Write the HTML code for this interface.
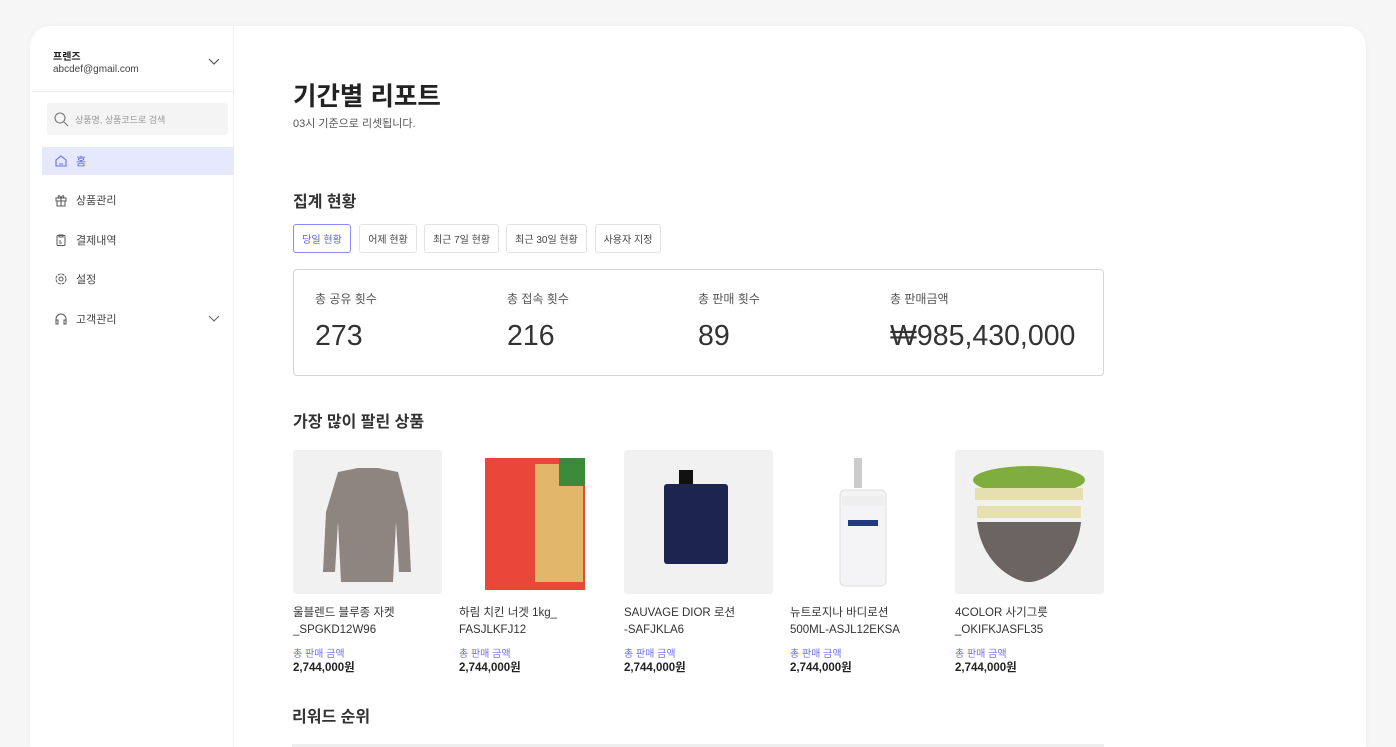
<!DOCTYPE html>
<html><head><meta charset="utf-8"><style>
*{box-sizing:border-box;margin:0;padding:0}
html,body{width:1396px;height:747px;overflow:hidden}
body{background:#f6f6f7;font-family:"Liberation Sans","Noto Sans CJK KR",sans-serif;color:#222;position:relative}
.card{position:absolute;left:30px;top:26px;width:1336px;height:721px;background:#fff;border-radius:20px 20px 0 0;box-shadow:0 0 6px rgba(0,0,0,.04)}
.side{position:absolute;left:30px;top:26px;width:204px;height:721px;border-right:1px solid #f0f0f0}
.t{position:absolute;white-space:nowrap}
.menu{position:absolute;left:12px;width:192px;height:28px;font-size:11px;color:#444;display:flex;align-items:center;padding-left:12px}
.menu svg{margin-right:8px}
.btn{position:absolute;top:224px;height:29px;border:1px solid #e3e3e3;border-radius:3px;font-size:10px;color:#444;display:flex;align-items:center;justify-content:center}
.img{position:absolute;top:450px;width:149px;height:144px;background:#f1f1f2;border-radius:3px;overflow:hidden}
.pn{position:absolute;top:605px;font-size:11.5px;color:#333;line-height:17px}
.pl{position:absolute;top:645px;font-size:10px;color:#6d6df0}
.pp{position:absolute;top:659px;font-size:11.5px;font-weight:bold;color:#222}
</style></head><body>
<div class="card"></div>
<div class="side">
 <div class="t" style="left:23px;top:22px;font-size:10px;font-weight:bold">프렌즈</div>
 <div class="t" style="left:23px;top:38px;font-size:10px;color:#444">abcdef@gmail.com</div>
 <svg class="t" style="left:178px;top:32px" width="12" height="8"><path d="M1 1l5 5 5-5" fill="none" stroke="#555" stroke-width="1.2"/></svg>
 <div class="t" style="left:2px;top:65px;width:202px;height:1px;background:#ececec"></div>
 <div class="t" style="left:17px;top:77px;width:181px;height:32px;background:#f4f4f4;border-radius:3px"></div>
 <svg class="t" style="left:24px;top:86px" width="15" height="15"><circle cx="6" cy="6" r="5" fill="none" stroke="#777" stroke-width="1.1"/><path d="M10 10l4 4" stroke="#777" stroke-width="1.1"/></svg>
 <div class="t" style="left:45px;top:87px;font-size:9px;color:#999">상품명, 상품코드로 검색</div>
</div>
<div class="menu" style="left:42px;top:147px;background:#e6e8fd;color:#5a5ae6"><svg width="14" height="14"><path d="M2 6l5-4 5 4v6H2z" fill="none" stroke="#6b6bf0" stroke-width="1.1"/><path d="M5 10h4" stroke="#6b6bf0"/></svg>홈</div>
<div class="menu" style="left:42px;top:186px"><svg width="14" height="14"><rect x="2" y="5" width="10" height="3" fill="none" stroke="#555"/><rect x="3" y="8" width="8" height="5" fill="none" stroke="#555"/><path d="M7 5v8M7 5C5 1 3 3 5 5M7 5c2-4 4-2 2 0" fill="none" stroke="#555"/></svg>상품관리</div>
<div class="menu" style="left:42px;top:226px"><svg width="14" height="14"><rect x="3" y="2.5" width="8" height="10" rx="1" fill="none" stroke="#555"/><path d="M5 2h4v2H5zM5 8h2M5 10h3" fill="none" stroke="#555"/></svg>결제내역</div>
<div class="menu" style="left:42px;top:265px"><svg width="14" height="14"><circle cx="7" cy="7" r="5" fill="none" stroke="#555" stroke-dasharray="3 1"/><circle cx="7" cy="7" r="2" fill="none" stroke="#555"/></svg>설정</div>
<div class="menu" style="left:42px;top:305px"><svg width="14" height="14"><path d="M2 9V7a5 5 0 0110 0v2M2 8h2v4H2zM10 8h2v4h-2z" fill="none" stroke="#555"/></svg>고객관리</div>
<svg class="t" style="left:208px;top:315px" width="12" height="8"><path d="M1 1l5 5 5-5" fill="none" stroke="#666" stroke-width="1.1"/></svg>

<div class="t" style="left:293px;top:76px;font-size:25.5px;font-weight:bold;color:#222">기간별 리포트</div>
<div class="t" style="left:293px;top:115px;font-size:11px;color:#555">03시 기준으로 리셋됩니다.</div>
<div class="t" style="left:293px;top:188px;font-size:16px;font-weight:bold;color:#333">집계 현황</div>
<div class="btn" style="left:293px;width:58px;border-color:#8a8af5;color:#5a5ae6">당일 현황</div>
<div class="btn" style="left:359px;width:58px">어제 현황</div>
<div class="btn" style="left:424px;width:75px">최근 7일 현황</div>
<div class="btn" style="left:506px;width:81px">최근 30일 현황</div>
<div class="btn" style="left:595px;width:66px">사용자 지정</div>
<div class="t" style="left:293px;top:269px;width:811px;height:107px;border:1px solid #d5d5d5;border-radius:4px"></div>
<div class="t" style="left:315px;top:290px;font-size:12px;color:#555">총 공유 횟수</div>
<div class="t" style="left:507px;top:290px;font-size:12px;color:#555">총 접속 횟수</div>
<div class="t" style="left:698px;top:290px;font-size:12px;color:#555">총 판매 횟수</div>
<div class="t" style="left:890px;top:290px;font-size:12px;color:#555">총 판매금액</div>
<div class="t" style="left:315px;top:320px;font-size:28.5px;color:#333">273</div>
<div class="t" style="left:507px;top:320px;font-size:28.5px;color:#333">216</div>
<div class="t" style="left:698px;top:320px;font-size:28.5px;color:#333">89</div>
<div class="t" style="left:890px;top:320px;font-size:28.5px;color:#333">₩985,430,000</div>
<div class="t" style="left:293px;top:408px;font-size:16px;font-weight:bold;color:#333">가장 많이 팔린 상품</div>

<div class="img" style="left:293px"><svg width="149" height="144"><path d="M45 22l20-4h20l20 4 10 40 3 60h-12l-3-50-3 60H48l-3-60-3 50H30l3-60z" fill="#8f8580"/></svg></div>
<div class="img" style="left:459px;background:#fff"><svg width="149" height="144"><rect x="26" y="8" width="100" height="132" fill="#e8473a"/><rect x="76" y="14" width="48" height="118" fill="#e2b76a"/><rect x="100" y="8" width="26" height="28" fill="#3a8a3a"/></svg></div>
<div class="img" style="left:624px"><svg width="149" height="144"><rect x="55" y="20" width="14" height="14" fill="#111"/><rect x="40" y="34" width="64" height="80" rx="3" fill="#1c2550"/></svg></div>
<div class="img" style="left:790px;background:#fff"><svg width="149" height="144"><rect x="64" y="8" width="8" height="30" fill="#ccc"/><rect x="50" y="40" width="46" height="96" rx="5" fill="#f4f4f6" stroke="#ddd"/><rect x="52" y="46" width="42" height="10" fill="#eee"/><rect x="58" y="70" width="30" height="6" fill="#223a7a"/></svg></div>
<div class="img" style="left:955px"><svg width="149" height="144"><ellipse cx="74" cy="30" rx="56" ry="14" fill="#7fae3f"/><path d="M20 38h108v12H20zM22 56h104v12H22z" fill="#e6e0b0"/><path d="M22 72h104c-4 40-36 60-52 60s-48-20-52-60z" fill="#6b6462"/></svg></div>

<div class="pn" style="left:293px">울블렌드 블루종 자켓<br>_SPGKD12W96</div>
<div class="pn" style="left:459px">하림 치킨 너겟 1kg_<br>FASJLKFJ12</div>
<div class="pn" style="left:624px">SAUVAGE DIOR 로션<br>-SAFJKLA6</div>
<div class="pn" style="left:790px">뉴트로지나 바디로션<br>500ML-ASJL12EKSA</div>
<div class="pn" style="left:955px">4COLOR 사기그릇<br>_OKIFKJASFL35</div>
<div class="pl" style="left:293px">총 판매 금액</div><div class="pl" style="left:459px">총 판매 금액</div><div class="pl" style="left:624px">총 판매 금액</div><div class="pl" style="left:790px">총 판매 금액</div><div class="pl" style="left:955px">총 판매 금액</div>
<div class="pp" style="left:293px">2,744,000원</div><div class="pp" style="left:459px">2,744,000원</div><div class="pp" style="left:624px">2,744,000원</div><div class="pp" style="left:790px">2,744,000원</div><div class="pp" style="left:955px">2,744,000원</div>
<div class="t" style="left:292px;top:703px;font-size:16px;font-weight:bold;color:#333">리워드 순위</div>
<div class="t" style="left:292px;top:744px;width:812px;height:3px;background:#eee"></div>
</body></html>
